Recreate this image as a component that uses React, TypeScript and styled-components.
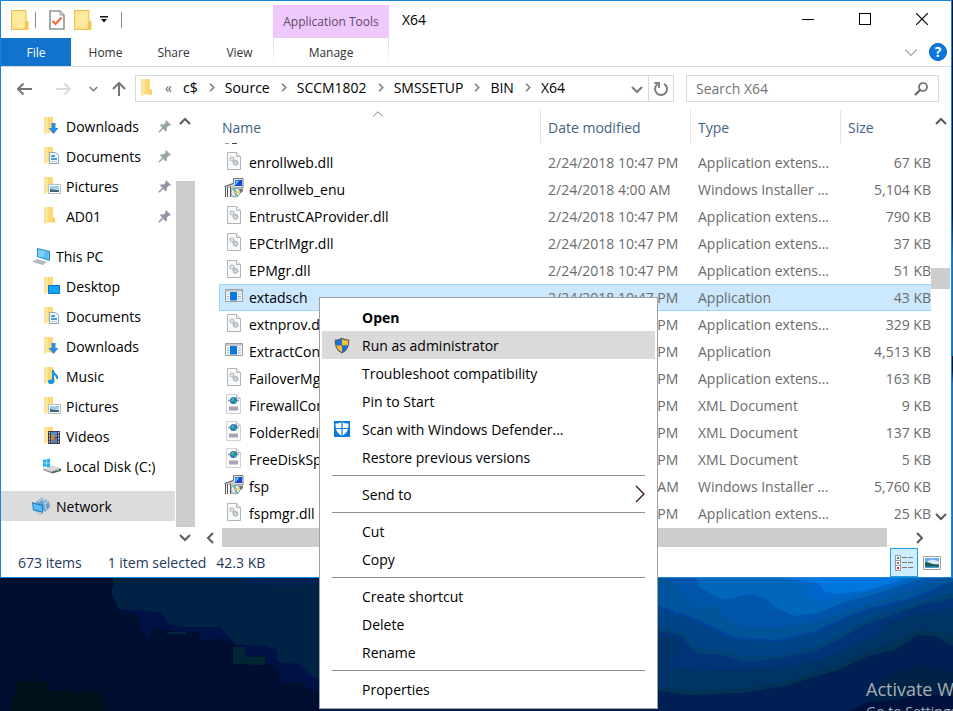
import React from "react";
import styled, { createGlobalStyle, css } from "styled-components";

const GlobalStyle = createGlobalStyle`
  *, *::before, *::after { box-sizing: border-box; }
  html, body { margin: 0; padding: 0; }
  body { font-family: "Open Sans", "Noto Sans", sans-serif; font-size: 14px; color: #000; }
  button, input { font: inherit; color: inherit; }
  svg { display: block; flex: none; }
`;

/* ---------- Icons ---------- */

const FolderIcon = () => (
  <svg width="18" height="20" viewBox="0 0 18 20" aria-hidden="true">
    <path d="M.5.500h14.500v11h2v8H.5z" fill="#fde28a" stroke="#eec04e" />
    <path d="M13.500 12h3v7h-3z" fill="#f4c84d" />
    <path d="M2 2h11.500v15H2z" fill="#feea9e" />
  </svg>
);

const TaskDocIcon = () => (
  <svg width="16" height="20" viewBox="0 0 16 20" aria-hidden="true">
    <path d="M1 1h10l4 4v14H1z" fill="#fff" stroke="#8f9499" strokeWidth="1.6" />
    <path d="M11 1v4h4" fill="#dfe2e5" stroke="#8f9499" />
    <path d="M3.500 11l3 3 6-6.500" fill="none" stroke="#f4683c" strokeWidth="2.200" />
  </svg>
);

const FolderShape = () => (
  <>
    <path d="M1 0h9v11h2v4.500H4L1 17z" fill="#fbd978" />
    <path d="M1 0h4v14l-3 2.500-1-1z" fill="#fee39a" />
    <path d="M10 10.500h2v5h-3z" fill="#f7cd62" />
  </>
);

type NavKind = "downloads" | "documents" | "pictures" | "folder" | "pc" | "desktop" | "music" | "videos" | "disk" | "network";

const NavIcon = ({ kind }: { kind: NavKind }) => {
  if (kind === "pc") {
    return (
      <svg width="20" height="17" viewBox="0 0 20 17" aria-hidden="true">
        <path d="M5 0l13 3v10L5 9z" fill="#2f8fd0" />
        <path d="M6 1.500l11 2.500v7.500L6 8.200z" fill="#5bc0f5" />
        <path d="M6 1.500l8 1.800-4 6L6 8.200z" fill="#7fd0fa" />
        <path d="M0 13.500l5-2.500 10 3-4 3z" fill="#c3c9cd" />
        <path d="M2 13.700l9 2.500M5 12.300l8 2.300" stroke="#8e979d" strokeWidth=".7" />
      </svg>
    );
  }
  if (kind === "network") {
    return (
      <svg width="20" height="18" viewBox="0 0 20 18" aria-hidden="true">
        <path d="M4 5l6-4.500L17 4l1 6-5 5z" fill="#6e9fc4" />
        <path d="M6 5l5-3.500 5 3M11 1l2 6 4-3M13 7l1 6" fill="none" stroke="#b5d4ea" strokeWidth="1.200" />
        <path d="M0 5l11 3v8L1 13.500z" fill="#1f78bd" />
        <path d="M1 6.500l9 2.400v5.600l-8.300-2z" fill="#53bdf7" />
        <path d="M3 16l5-1 4 2-3 1z" fill="#bfc8ce" />
      </svg>
    );
  }
  if (kind === "disk") {
    return (
      <svg width="20" height="16" viewBox="0 0 20 16" aria-hidden="true">
        <path d="M1 2l3-.7v3.500H1zM4.500 1.200L8 .5v4.300H4.500zM1 5.300h3V9L1 8.400zM4.500 5.300H8v4.300L4.500 9z" fill="#1cb2ee" />
        <path d="M1 11l9-3 9 2.500v2L10 15.500l-9-3.500z" fill="#8b8e90" />
        <path d="M1 11l9-3 9 2.500-9 3.200z" fill="#d6d8d9" />
        <path d="M10 13.700l9-3.200v2.500L10 15.500z" fill="#5c6063" />
        <path d="M15 13l2-.7" stroke="#5ff06a" />
      </svg>
    );
  }
  return (
    <svg width="18" height="18" viewBox="0 0 18 18" aria-hidden="true">
      <FolderShape />
      {kind === "downloads" && <path d="M8.500 6h4v5h3L10.500 17l-5-6h3z" fill="#2f8be0" />}
      {kind === "documents" && (
        <>
          <path d="M6.500 5.500h6L15.500 8v8.500h-9z" fill="#f4f7fa" stroke="#94a3b0" />
          <path d="M8 8h4v2H8zM8 11h6v2H8z" fill="#3f9de0" />
          <path d="M8 14.500h6" stroke="#9cc4e2" strokeWidth=".8" />
        </>
      )}
      {kind === "pictures" && (
        <>
          <path d="M5.500 7.500h12v9h-12z" fill="#fff" stroke="#b6bfc6" />
          <path d="M7 9h9v3H7z" fill="#9bcdf0" />
          <path d="M7 12l4 .5 5 .5v2H7z" fill="#3b6878" />
        </>
      )}
      {kind === "desktop" && <path d="M5.500 8.500h11v8h-11z" fill="#13a3f7" stroke="#0875c9" />}
      {kind === "music" && (
        <>
          <path d="M10 4c0 4 5 3 4 8" fill="none" stroke="#1692e8" strokeWidth="2.200" />
          <path d="M10 3v12" stroke="#1692e8" strokeWidth="2" />
          <ellipse cx="8" cy="14.800" rx="3" ry="2.400" fill="#1692e8" />
        </>
      )}
      {kind === "videos" && (
        <>
          <path d="M5 4h12v13H5z" fill="#3d4148" />
          <path d="M8 5h6v5H8z" fill="#4f8ed6" />
          <path d="M8 11h6v5H8z" fill="#5a7fb0" />
          <path d="M8 8l3-1 1 3-2 3-2 1z" fill="#c98a3c" />
          <path d="M6.500 5v12M15.500 5v12" stroke="#d8dadd" strokeDasharray="1.500 1.500" />
        </>
      )}
    </svg>
  );
};

const PinIcon = ({ color }: { color: string }) => (
  <svg width="13" height="13" viewBox="0 0 13 13" aria-hidden="true">
    <path d="M8 0l5 5-1.300.8-.9-.3-2 2.200.2 2.800-1.200 1L2 5.200l1.200-1 2.600.3 2-2.300-.4-1z" fill={color} />
    <path d="M5 8L.8 12.200" stroke={color} strokeWidth="1.500" />
  </svg>
);

type FileKind = "dll" | "msi" | "exe" | "xml";

const FileIcon = ({ kind }: { kind: FileKind }) => {
  if (kind === "msi") {
    return (
      <svg width="20" height="20" viewBox="0 0 20 20" aria-hidden="true">
        <path d="M9.500.500h9.500v9.500H9.500z" fill="#e4e4e0" stroke="#777" />
        <path d="M11 2h7v6h-7z" fill="#1246d6" />
        <path d="M11.500 2.500h4L12 7h-.5z" fill="#4fc3f5" />
        <path d="M13 11h6v2l-2 2h-3z" fill="#777" />
        <path d="M1 8l8-3 2 3v11H6V10H4v9H1z" fill="#c9c9c9" />
        <path d="M1.500 9v10M3.500 9v10M6.500 8.500V19M.5 8.500L9 5.500" stroke="#555" />
        <path d="M2.500 9.500v9" stroke="#fff" />
        <circle cx="11.500" cy="14.500" r="4.500" fill="#e6efec" stroke="#7b8785" strokeWidth=".8" />
        <path d="M11.500 14.500L8.300 11.500a4.500 4.500 0 013.700-1.300zM11.500 14.500l3 3a4.500 4.500 0 01-3.500 1.200z" fill="#5cc8a0" />
        <path d="M11.500 14.500l3.800-2.300a4.500 4.500 0 01.3 3.300z" fill="#f0dd67" />
        <circle cx="11.500" cy="14.500" r="1.200" fill="#fff" stroke="#666" strokeWidth=".7" />
      </svg>
    );
  }
  if (kind === "exe") {
    return (
      <svg width="18" height="14" viewBox="0 0 18 14" aria-hidden="true">
        <path d="M.5.500h17v12h-17z" fill="#f7f8f9" stroke="#9a9da0" />
        <path d="M1 1h16v2H1z" fill="#c9ccce" />
        <path d="M5 3h7v8.500H5z" fill="#0a78dc" />
        <path d="M2 5h2M2 7.500h2M2 10h2M13 5h3M13 7.500h3M13 10h3" stroke="#9db4c6" />
      </svg>
    );
  }
  if (kind === "xml") {
    return (
      <svg width="17" height="20" viewBox="0 0 17 20" aria-hidden="true">
        <path d="M1.500.500h10l4 4v15h-14z" fill="#fbfbfc" stroke="#d0d2d6" />
        <path d="M11.500.500v4h4" fill="#e6e8ea" stroke="#b2b5b9" />
        <path d="M3 6.500h11" stroke="#9a93a0" strokeWidth="1.500" />
        <circle cx="8.500" cy="6.500" r="3.500" fill="#1f6fd0" />
        <path d="M6.500 4.500l2.500-1 .5 2.500-2 2-1.500-1zM9.500 7.500l2-1v2l-2 1z" fill="#3fc07a" />
        <path d="M4 12.500h9v4H4z" fill="#aaa2b4" />
      </svg>
    );
  }
  return (
    <svg width="14" height="18" viewBox="0 0 14 18" aria-hidden="true">
      <path d="M.5.500h9l4 4v13H.5z" fill="#fafafa" stroke="#b3b3b3" />
      <path d="M9.500.500v4h4" fill="#ececec" stroke="#b5b5b5" />
      <circle cx="5" cy="7" r="2" fill="#e4eaed" stroke="#a9b8c0" strokeWidth="1.400" strokeDasharray="1.400 .5" />
      <circle cx="8.500" cy="10.800" r="2.200" fill="#d3dde2" stroke="#9dadb6" strokeWidth="1.500" strokeDasharray="1.500 .5" />
    </svg>
  );
};

type Dir = "up" | "down" | "left" | "right";
const chevronPaths: Record<Dir, string> = {
  up: "M1 8l5-5 5 5",
  down: "M1 4l5 5 5-5",
  left: "M8 1L3 6l5 5",
  right: "M4 1l5 5-5 5",
};
const Chevron = ({ dir, size = 12, color = "#5a5a5a", weight = 2 }: { dir: Dir; size?: number; color?: string; weight?: number }) => (
  <svg width={size} height={size} viewBox="0 0 12 12" aria-hidden="true">
    <path d={chevronPaths[dir]} fill="none" stroke={color} strokeWidth={weight} />
  </svg>
);

const Arrow = ({ dir, color }: { dir: "left" | "right" | "up"; color: string }) => (
  <svg width="16" height="16" viewBox="0 0 16 16" aria-hidden="true">
    <path
      d={dir === "left" ? "M15 8H1M6.500 2.500L1 8l5.500 5.500" : dir === "right" ? "M1 8h14M9.500 2.500L15 8l-5.500 5.500" : "M8 15V2M2 8l6-6 6 6"}
      fill="none"
      stroke={color}
      strokeWidth="2"
    />
  </svg>
);

const RefreshIcon = () => (
  <svg width="16" height="16" viewBox="0 0 16 16" aria-hidden="true">
    <path d="M11 2.800A6 6 0 114.500 3.200" fill="none" stroke="#7d7d7d" strokeWidth="2" />
    <path d="M1.500 2h4.500v5" fill="none" stroke="#7d7d7d" strokeWidth="1.800" />
  </svg>
);

const SearchIcon = () => (
  <svg width="14" height="14" viewBox="0 0 14 14" aria-hidden="true">
    <circle cx="9" cy="5" r="4" fill="none" stroke="#6c6c6c" strokeWidth="1.700" />
    <path d="M6 8l-5 5" stroke="#6c6c6c" strokeWidth="2.400" />
  </svg>
);

const ShieldIcon = () => (
  <svg width="16" height="17" viewBox="0 0 16 17" aria-hidden="true">
    <path d="M8 .5c2 1.500 4.500 2 7.200 2 .3 6-1.200 11-7.200 14C2 13.500.5 8.500.8 2.500 3.500 2.500 6 2 8 .5z" fill="#585d64" />
    <path d="M8 2v6.500H2.200C1.900 7 1.900 5 2 3.600 4.200 3.500 6.300 3 8 2z" fill="#1b6fd6" />
    <path d="M8 2v6.500h5.800c.3-1.500.3-3.500.2-4.900C11.800 3.500 9.700 3 8 2z" fill="#fbc02f" />
    <path d="M8 8.500v6.700c-3.200-1.700-5-3.700-5.800-6.700z" fill="#fbc02f" />
    <path d="M8 8.500v6.700c3.200-1.700 5-3.700 5.800-6.700z" fill="#1b6fd6" />
  </svg>
);

const DefenderIcon = () => (
  <svg width="16" height="16" viewBox="0 0 16 16" aria-hidden="true">
    <path d="M0 0h16v16H0z" fill="#0a78dc" />
    <path d="M8 1c2 1.200 4 1.500 6.500 1.500 0 5.500-1 9.500-6.500 12.500-5.500-3-6.500-7-6.500-12.500C4 2.500 6 2.200 8 1z" fill="#fff" />
    <path d="M8 1v14M1 7.500h14" stroke="#0a78dc" strokeWidth="1.200" />
  </svg>
);

const DetailsViewIcon = () => (
  <svg width="18" height="16" viewBox="0 0 18 16" shapeRendering="crispEdges" aria-hidden="true">
    <path d="M.5.500h5v15h-5z" fill="#fff" stroke="#9a9a9a" />
    <path d="M1 5h4v1H1zM1 10h4v1H1z" fill="#9a9a9a" />
    <path d="M2 2h2v2H2z" fill="#3f7f5f" />
    <path d="M2 7h2v2H2z" fill="#8c6b3a" />
    <path d="M2 12h2v2H2z" fill="#d12c20" />
    <path d="M7 2.500h5M13 2.500h5M7 7.500h5M13 7.500h5M7 12.500h5M13 12.500h5" stroke="#7a7a7a" />
  </svg>
);

const ThumbViewIcon = () => (
  <svg width="18" height="14" viewBox="0 0 18 14" aria-hidden="true">
    <path d="M.5.500h17v13H.5z" fill="#fff" stroke="#9f9f9f" />
    <path d="M2 2h14v10H2z" fill="#6aa8ec" />
    <path d="M4 5l6-1.500 6 2v3H8z" fill="#d9e9f8" />
    <path d="M2 6c4 0 8 3 14 2.500V11H2z" fill="#1f5a52" />
    <path d="M2 10.500h14V12H2z" fill="#3fa0c8" />
  </svg>
);

const Wallpaper = styled.svg`
  width: 100%;
  height: 100%;
`;

const WallpaperArt = () => (
  <Wallpaper viewBox="0 0 953 133" preserveAspectRatio="none" aria-hidden="true">
    <path d="M0 0H953V133H0z" fill="#000f30" />
    <path d="M10 133L12 117 19 112 16 103H47V113L68 112 73 115 98 113 107 133zM30 93L36 92 35 97 31 98z" fill="#001119" />
    <path d="M117 0L111 14 119 32 137 36 141 52 150 65 152 50 180 54 201 54V64L220 60 235 65 245 74V79L266 78V86L278 88 280 104 300 104 312 113 320 110V0z" fill="#001146" />
    <path d="M117 0L111 14 119 31 160 34 168 45 180 49 220 49 235 66 265 68 277 72V84L298 86 312 98 320 102V0z" fill="#002244" />
    <path d="M247 0H320V6L290 8 262 6 247 4z" fill="#002255" />
    <path d="M233 69H245V79H265V87L233 86zM168 54H186V56H168zM113 0H122V5H113z" fill="#002533" />
    <path d="M320 0H953V133H320z" fill="#002055" />
    <path d="M655 112L688 117 742 115 788 107 838 92 868 78 895 72 918 57 935 58 953 68V0H655z" fill="#003355" />
    <path d="M655 109L688 113 742 111 788 103 838 87 868 72 895 64 918 52 935 53 953 58V0H655z" fill="#003366" />
    <path d="M655 59L675 59 680 70 668 88 700 92 755 91 788 88 822 81 852 68 872 60 888 45 908 38 953 30V0H655z" fill="#003377" />
    <path d="M655 52L682 58 695 75 722 77 745 84 782 80 815 73 842 60 862 48 895 36 922 27 953 20V0H655z" fill="#004477" />
    <path d="M655 47L682 54 695 69 722 72 745 79 782 77 815 68 842 56 862 44 895 32 922 24 953 14V0H655z" fill="#004488" />
    <path d="M655 29L695 43 735 61 776 64 815 55 842 42 862 34 909 22 953 5V0H655z" fill="#0044a0" />
    <path d="M655 26L695 40 735 59 776 62 815 53 842 40 862 32 909 20 953 3V0H655z" fill="#005599" />
    <path d="M655 22L668 24 675 35 697 32 694 25 680 14 655 5z" fill="#0055a0" />
    <path d="M667 0L684 18 697 30 715 27 725 42 745 50 788 49 822 42 855 30 895 17 935 4 945 0z" fill="#0055aa" />
    <path d="M696 0L698 8 722 22 752 16 768 22 775 30 795 38 818 35 842 25 888 12 925 0z" fill="#0066bb" />
    <path d="M780 0L806 6 808 18 824 24 850 18 890 8 915 0z" fill="#0066cc" />
    <path d="M785 0L818 5 825 14 838 16 868 12 908 0z" fill="#0077dd" />
    <path d="M872 120L885 100 920 88 953 94V133H872z" fill="#002244" />
    <path d="M850 133L868 124 898 122 918 116 953 118V133z" fill="#00103c" />
  </Wallpaper>
);

/* ---------- Page structure ---------- */

const Desktop = styled.div`
  position: relative;
  display: flex;
  flex-direction: column;
  min-height: 100vh;
  overflow: hidden;
  background: linear-gradient(#001a44 0 30%, #0a78c8 36% 50%, #001a44 50% 52%, #0a78dc 54%);
`;

const Backdrop = styled.div`
  flex: 1 0 133px;
  height: 133px;
  min-width: 0;
`;

const Activation = styled.div`
  position: absolute;
  right: -92px;
  bottom: -11px;
  width: 179px;
  color: #a9adb3;
  white-space: nowrap;
`;
const ActivationTitle = styled.div`
  font-size: 18px;
  line-height: 26px;
`;
const ActivationText = styled.div`
  font-size: 14px;
  line-height: 20px;
`;

const Window = styled.main`
  margin-right: 1px;
  border: 1px solid #1883d7;
  background: #fff;
`;

const plainButton = css`
  display: flex;
  align-items: center;
  justify-content: center;
  border: 0;
  padding: 0;
  background: none;
`;

const IconButton = styled.button<{ $width?: number; $height?: number }>`
  ${plainButton}
  flex: none;
  width: ${(p) => p.$width ?? 20}px;
  height: ${(p) => p.$height ?? 20}px;
`;

const TitleBar = styled.header`
  display: flex;
  height: 37px;
  padding-right: 1px;
`;

const QuickAccess = styled.div`
  display: flex;
  align-items: center;
  width: 272px;
  padding-left: 9px;
`;
const Divider = styled.span<{ $gap: number }>`
  width: 1px;
  height: 16px;
  margin: 0 ${(p) => p.$gap}px;
  background: #8a8a8a;
`;

const ToolsTab = styled.div`
  display: flex;
  align-items: center;
  justify-content: center;
  width: 116px;
  margin-top: 4px;
  background: #efc9fd;
  color: #5b4a66;
  font-size: 12px;
`;

const WindowTitle = styled.h1`
  flex: 1;
  margin: 0;
  padding-left: 13px;
  font-size: 14px;
  font-weight: 400;
  line-height: 37px;
`;

const Ribbon = styled.nav`
  display: flex;
  height: 29px;
  border-bottom: 1px solid #dadbdc;
`;
const RibbonTab = styled.button<{ $width: number; $kind?: "file" | "tool" }>`
  ${plainButton}
  width: ${(p) => p.$width}px;
  height: 28px;
  font-size: 12px;
  color: #333;
  ${(p) => p.$kind === "file" && css`background: #1173cb; color: #fff;`}
  ${(p) =>
    p.$kind === "tool" &&
    css`
      border-style: solid;
      border-width: 0 1px;
      border-image: linear-gradient(#dcdcdc, #fff) 1;
    `}
`;
const Spacer = styled.div<{ $width?: number }>`
  flex: ${(p) => (p.$width ? `0 0 ${p.$width}px` : "1")};
`;
const HelpButton = styled.button`
  ${plainButton}
  align-self: center;
  width: 18px;
  height: 18px;
  margin: 0 4px 0 11px;
  border: 1px solid #0a5cae;
  border-radius: 50%;
  background: #0a78dc;
  color: #fff;
  font-size: 14px;
  font-weight: 700;
  line-height: 16px;
`;

const AddressRow = styled.div`
  display: flex;
  align-items: center;
  height: 43px;
  padding-right: 12px;
`;
const AddressBox = styled.div`
  display: flex;
  align-items: center;
  flex: 1;
  height: 27px;
  border: 1px solid #d9d9d9;
`;
const Crumbs = styled.div`
  display: flex;
  align-items: center;
  flex: 1;
  min-width: 0;
  padding-bottom: 2px;
`;
const Crumb = styled.button`
  ${plainButton}
  line-height: 20px;
`;
const CrumbMore = styled.span`
  width: 24px;
  padding-left: 6px;
  color: #666;
  line-height: 20px;
`;
const Refresh = styled.button`
  ${plainButton}
  width: 25px;
  height: 25px;
  border-left: 1px solid #d9d9d9;
`;
const SearchBox = styled.label`
  display: flex;
  align-items: center;
  width: 253px;
  height: 27px;
  margin-left: 12px;
  padding: 0 10px 0 9px;
  border: 1px solid #d9d9d9;
`;
const SearchInput = styled.input`
  flex: 1;
  min-width: 0;
  border: 0;
  padding: 0;
  outline: 0;
  background: none;
  &::placeholder { color: #737373; opacity: 1; }
`;

const Body = styled.div`
  display: flex;
`;
const Sidebar = styled.nav`
  width: 174px;
  padding-top: 1px;
`;
const NavItem = styled.a<{ $level: 0 | 1; $gap?: boolean; $current?: boolean }>`
  display: flex;
  align-items: center;
  height: 30px;
  margin-top: ${(p) => (p.$gap ? 10 : 0)}px;
  padding: 0 4px 0 ${(p) => (p.$level ? 41 : 31)}px;
  background: ${(p) => (p.$current ? "#dcdcdc" : "none")};
  color: #000;
  text-decoration: none;
  white-space: nowrap;
`;
const NavIconBox = styled.span`
  display: flex;
  justify-content: center;
  flex: none;
  width: 20px;
  margin-right: 4px;
`;
const NavLabel = styled.span`
  flex: 1;
`;

const VScroll = styled.div`
  display: flex;
  flex-direction: column;
  flex: none;
  align-items: flex-start;
  width: 20px;
`;
const VTrack = styled.div<{ $before: number; $after?: number; $inset?: number }>`
  flex: 1;
  width: 19px;
  margin-left: ${(p) => p.$inset ?? 0}px;
  padding: ${(p) => p.$before}px 0 ${(p) => p.$after ?? 0}px;
`;
const Thumb = styled.div`
  height: 100%;
  background: #cdcdcd;
`;

const FilePane = styled.section`
  flex: 1;
  min-width: 0;
  margin-left: 7px;
`;
const ListArea = styled.div`
  display: flex;
  padding-left: 17px;
`;
const FileTable = styled.table`
  flex: 1;
  table-layout: fixed;
  width: 100%;
  border-collapse: separate;
  border-spacing: 0;
`;
const Col = styled.col<{ $width?: number }>`
  width: ${(p) => (p.$width ? `${p.$width}px` : "auto")};
`;
const HeadCell = styled.th<{ $first?: boolean }>`
  height: 33px;
  padding: 2px 0 0 ${(p) => (p.$first ? 3 : 7)}px;
  border-left: ${(p) => (p.$first ? 0 : 1)}px solid #e5e5e5;
  color: #43627f;
  font-weight: 400;
  text-align: left;
`;
const HeadInner = styled.div`
  position: relative;
  line-height: 20px;
`;
const SortMark = styled.span`
  position: absolute;
  top: -9px;
  left: 49%;
  transform: translateX(-50%);
`;
const SliverCell = styled.td`
  height: 6px;
  padding: 0 0 4px 6px;
  line-height: 0;
`;
const Row = styled.tr<{ $selected?: boolean }>`
  td {
    height: 27px;
    ${(p) =>
      p.$selected &&
      css`
        background: #cce8ff;
        border-top: 1px solid #99d8fb;
        border-bottom: 1px solid #99d8fb;
        &:first-child { border-left: 1px solid #99d8fb; padding-left: 4px; }
      `}
  }
`;
const Cell = styled.td<{ $kind: "name" | "text" | "size" }>`
  padding: 0 0 0 ${(p) => (p.$kind === "name" ? 5 : 8)}px;
  color: ${(p) => (p.$kind === "name" ? "#000" : "#6b6b6b")};
  text-align: ${(p) => (p.$kind === "size" ? "right" : "left")};
  white-space: nowrap;
  line-height: 20px;
`;
const FileName = styled.span`
  display: flex;
  align-items: center;
  height: 20px;
`;
const FileIconBox = styled.span`
  display: flex;
  justify-content: center;
  flex: none;
  width: 20px;
  margin-right: 5px;
  padding: 0 1px 3px 0;
`;

const HScroll = styled.div`
  display: flex;
  align-items: center;
  height: 20px;
  padding: 1px 22px 0 0;
`;
const HTrack = styled.div`
  flex: 1;
  height: 19px;
  padding: 0 22px 0 3px;
`;

const StatusBar = styled.footer`
  display: flex;
  align-items: center;
  height: 30px;
  padding: 0 5px 0 17px;
  color: #1e395b;
`;
const StatusText = styled.span<{ $gap: number }>`
  margin-right: ${(p) => p.$gap}px;
`;
const ViewButton = styled.button<{ $active?: boolean }>`
  ${plainButton}
  width: 28px;
  height: 29px;
  margin-top: 1px;
  ${(p) => p.$active && css`border: 1px solid #26a0da; background: #cdeeff;`}
`;

const Menu = styled.div`
  position: absolute;
  top: 297px;
  left: 319px;
  width: 339px;
  padding: 5px 2px;
  border: 1px solid #a0a0a0;
  background: #fff;
`;
const MenuItem = styled.button<{ $strong?: boolean; $hover?: boolean }>`
  display: flex;
  align-items: center;
  width: 100%;
  height: 28px;
  padding: 0 10px 0 0;
  border: 0;
  background: ${(p) => (p.$hover ? "#dadada" : "none")};
  font-weight: ${(p) => (p.$strong ? 700 : 400)};
  line-height: 20px;
  text-align: left;
`;
const MenuLabel = styled.span`
  flex: 1;
  padding-top: 2px;
`;
const MenuIcon = styled.span`
  display: flex;
  justify-content: center;
  flex: none;
  width: 40px;
`;
const MenuRule = styled.hr`
  height: 1px;
  margin: 4px 10px;
  border: 0;
  background: #919191;
`;

/* ---------- Data ---------- */

const navItems: { label: string; kind: NavKind; level: 0 | 1; pin?: string; gap?: boolean; current?: boolean }[] = [
  { label: "Downloads", kind: "downloads", level: 1, pin: "#93a5a5" },
  { label: "Documents", kind: "documents", level: 1, pin: "#93a5a5" },
  { label: "Pictures", kind: "pictures", level: 1, pin: "#9494a6" },
  { label: "AD01", kind: "folder", level: 1, pin: "#9494a6" },
  { label: "This PC", kind: "pc", level: 0, gap: true },
  { label: "Desktop", kind: "desktop", level: 1 },
  { label: "Documents", kind: "documents", level: 1 },
  { label: "Downloads", kind: "downloads", level: 1 },
  { label: "Music", kind: "music", level: 1 },
  { label: "Pictures", kind: "pictures", level: 1 },
  { label: "Videos", kind: "videos", level: 1 },
  { label: "Local Disk (C:)", kind: "disk", level: 1 },
  { label: "Network", kind: "network", level: 0, gap: true, current: true },
];

const EXT = "Application extens...";
const files: { name: string; kind: FileKind; date: string; type: string; size: string; selected?: boolean }[] = [
  { name: "enrollweb.dll", kind: "dll", date: "2/24/2018 10:47 PM", type: EXT, size: "67 KB" },
  { name: "enrollweb_enu", kind: "msi", date: "2/24/2018 4:00 AM", type: "Windows Installer ...", size: "5,104 KB" },
  { name: "EntrustCAProvider.dll", kind: "dll", date: "2/24/2018 10:47 PM", type: EXT, size: "790 KB" },
  { name: "EPCtrlMgr.dll", kind: "dll", date: "2/24/2018 10:47 PM", type: EXT, size: "37 KB" },
  { name: "EPMgr.dll", kind: "dll", date: "2/24/2018 10:47 PM", type: EXT, size: "51 KB" },
  { name: "extadsch", kind: "exe", date: "2/24/2018 10:47 PM", type: "Application", size: "43 KB", selected: true },
  { name: "extnprov.dll", kind: "dll", date: "2/24/2018 10:47 PM", type: EXT, size: "329 KB" },
  { name: "ExtractContent", kind: "exe", date: "2/24/2018 10:47 PM", type: "Application", size: "4,513 KB" },
  { name: "FailoverMgr.dll", kind: "dll", date: "2/24/2018 10:47 PM", type: EXT, size: "163 KB" },
  { name: "FirewallConfig", kind: "xml", date: "2/24/2018 10:47 PM", type: "XML Document", size: "9 KB" },
  { name: "FolderRedirection", kind: "xml", date: "2/24/2018 10:47 PM", type: "XML Document", size: "137 KB" },
  { name: "FreeDiskSpace", kind: "xml", date: "2/24/2018 10:47 PM", type: "XML Document", size: "5 KB" },
  { name: "fsp", kind: "msi", date: "2/24/2018 10:47 AM", type: "Windows Installer ...", size: "5,760 KB" },
  { name: "fspmgr.dll", kind: "dll", date: "2/24/2018 10:47 PM", type: EXT, size: "25 KB" },
];

const crumbs = ["c$", "Source", "SCCM1802", "SMSSETUP", "BIN", "X64"];

type Entry = { label: string; icon?: "shield" | "defender"; strong?: boolean; hover?: boolean; sub?: boolean };
const menuGroups: Entry[][] = [
  [
    { label: "Open", strong: true },
    { label: "Run as administrator", icon: "shield", hover: true },
    { label: "Troubleshoot compatibility" },
    { label: "Pin to Start" },
    { label: "Scan with Windows Defender...", icon: "defender" },
    { label: "Restore previous versions" },
  ],
  [{ label: "Send to", sub: true }],
  [{ label: "Cut" }, { label: "Copy" }],
  [{ label: "Create shortcut" }, { label: "Delete" }, { label: "Rename" }],
  [{ label: "Properties" }],
];

export default function App() {
  return (
    <Desktop>
      <GlobalStyle />
      <Window>
        <TitleBar>
          <QuickAccess>
            <IconButton aria-label="Explorer"><FolderIcon /></IconButton>
            <Divider $gap={5} />
            <Spacer $width={6} />
            <IconButton aria-label="Properties" $width={20}><TaskDocIcon /></IconButton>
            <IconButton aria-label="New folder" $width={32}><FolderIcon /></IconButton>
            <IconButton aria-label="Customize toolbar" $width={10}>
              <svg width="8" height="7" viewBox="0 0 8 7" aria-hidden="true">
                <path d="M0 0h8v1.500H0zM1 3h6L4 6.500z" fill="#111" />
              </svg>
            </IconButton>
            <Divider $gap={12} />
          </QuickAccess>
          <ToolsTab>Application Tools</ToolsTab>
          <WindowTitle>X64</WindowTitle>
          <IconButton aria-label="Minimize" $width={56} $height={36}>
            <svg width="12" height="12" viewBox="0 0 12 12" shapeRendering="crispEdges"><path d="M0 6.500h12" stroke="#000" /></svg>
          </IconButton>
          <IconButton aria-label="Maximize" $width={57} $height={36}>
            <svg width="12" height="12" viewBox="0 0 12 12" shapeRendering="crispEdges"><path d="M.5.500h11v11H.5z" fill="none" stroke="#000" /></svg>
          </IconButton>
          <IconButton aria-label="Close" $width={57} $height={36}>
            <svg width="12" height="12" viewBox="0 0 12 12"><path d="M0 0l12 12M12 0L0 12" stroke="#000" strokeWidth="1.200" /></svg>
          </IconButton>
        </TitleBar>

        <Ribbon aria-label="Ribbon tabs">
          <RibbonTab $width={70} $kind="file">File</RibbonTab>
          <RibbonTab $width={69}>Home</RibbonTab>
          <RibbonTab $width={67}>Share</RibbonTab>
          <RibbonTab $width={65}>View</RibbonTab>
          <Spacer $width={1} />
          <RibbonTab $width={116} $kind="tool">Manage</RibbonTab>
          <Spacer />
          <IconButton aria-label="Collapse ribbon" $width={14} $height={28}>
            <Chevron dir="down" size={14} color="#a0a0a0" weight={1} />
          </IconButton>
          <HelpButton aria-label="Help">?</HelpButton>
        </Ribbon>

        <AddressRow>
          <Spacer $width={12} />
          <IconButton aria-label="Back" $width={24}><Arrow dir="left" color="#757575" /></IconButton>
          <Spacer $width={14} />
          <IconButton aria-label="Forward" $width={24}><Arrow dir="right" color="#dadada" /></IconButton>
          <Spacer $width={8} />
          <IconButton aria-label="Recent locations"><Chevron dir="down" size={9} color="#7a7a7a" /></IconButton>
          <Spacer $width={6} />
          <IconButton aria-label="Up"><Arrow dir="up" color="#757575" /></IconButton>
          <Spacer $width={6} />
          <AddressBox>
            <Crumbs>
              <Spacer $width={4} />
              <svg width="14" height="18" viewBox="0 0 14 18" aria-hidden="true"><FolderShape /></svg>
              <Spacer $width={5} />
              <CrumbMore>«</CrumbMore>
              {crumbs.map((c, i) => (
                <React.Fragment key={c}>
                  {i > 0 && (
                    <IconButton aria-label={`Folders beside ${c}`} $width={27}>
                      <Chevron dir="right" size={9} color="#7a7a7a" />
                    </IconButton>
                  )}
                  <Crumb>{c}</Crumb>
                </React.Fragment>
              ))}
            </Crumbs>
            <IconButton aria-label="Previous locations" $width={22}><Chevron dir="down" color="#7a7a7a" /></IconButton>
            <Refresh aria-label="Refresh"><RefreshIcon /></Refresh>
          </AddressBox>
          <SearchBox>
            <SearchInput type="text" placeholder="Search X64" aria-label="Search X64" />
            <SearchIcon />
          </SearchBox>
        </AddressRow>

        <Body>
          <Sidebar aria-label="Navigation pane">
            {navItems.map((n, i) => (
              <NavItem key={i} href="#" $level={n.level} $gap={n.gap} $current={n.current}>
                <NavIconBox><NavIcon kind={n.kind} /></NavIconBox>
                <NavLabel>{n.label}</NavLabel>
                {n.pin && <PinIcon color={n.pin} />}
              </NavItem>
            ))}
          </Sidebar>
          <VScroll>
            <IconButton aria-label="Scroll up" $height={24}><Chevron dir="up" /></IconButton>
            <VTrack $before={47} $inset={1}><Thumb /></VTrack>
            <IconButton aria-label="Scroll down"><Chevron dir="down" /></IconButton>
          </VScroll>
          <FilePane>
            <ListArea>
              <FileTable>
                <colgroup>
                  <Col />
                  <Col $width={150} />
                  <Col $width={150} />
                  <Col $width={91} />
                </colgroup>
                <thead>
                  <tr>
                    <HeadCell $first>
                      <HeadInner>
                        Name
                        <SortMark><Chevron dir="up" size={11} color="#707070" weight={1} /></SortMark>
                      </HeadInner>
                    </HeadCell>
                    <HeadCell>Date modified</HeadCell>
                    <HeadCell>Type</HeadCell>
                    <HeadCell>Size</HeadCell>
                  </tr>
                </thead>
                <tbody>
                  <tr>
                    <SliverCell colSpan={4}>
                      <svg width="14" height="2" viewBox="0 0 14 2" aria-hidden="true">
                        <path d="M0 .5h4" stroke="#999" />
                        <path d="M7 .5h5" stroke="#444" />
                      </svg>
                    </SliverCell>
                  </tr>
                  {files.map((f) => (
                    <Row key={f.name} $selected={f.selected}>
                      <Cell $kind="name">
                        <FileName>
                          <FileIconBox><FileIcon kind={f.kind} /></FileIconBox>
                          {f.name}
                        </FileName>
                      </Cell>
                      <Cell $kind="text">{f.date}</Cell>
                      <Cell $kind="text">{f.type}</Cell>
                      <Cell $kind="size">{f.size}</Cell>
                    </Row>
                  ))}
                </tbody>
              </FileTable>
              <VScroll>
                <IconButton aria-label="Scroll list up" $height={24}><Chevron dir="up" /></IconButton>
                <VTrack $before={134} $after={216}><Thumb /></VTrack>
                <IconButton aria-label="Scroll list down" $height={22}><Chevron dir="down" /></IconButton>
              </VScroll>
            </ListArea>
            <HScroll>
              <IconButton aria-label="Scroll list left" $width={17}><Chevron dir="left" /></IconButton>
              <HTrack><Thumb /></HTrack>
              <IconButton aria-label="Scroll list right"><Chevron dir="right" /></IconButton>
            </HScroll>
          </FilePane>
        </Body>

        <StatusBar>
          <StatusText $gap={26}>673 items</StatusText>
          <StatusText $gap={10}>1 item selected</StatusText>
          <StatusText $gap={0}>42.3 KB</StatusText>
          <Spacer />
          <ViewButton $active aria-label="Details view"><DetailsViewIcon /></ViewButton>
          <ViewButton aria-label="Large icons view"><ThumbViewIcon /></ViewButton>
        </StatusBar>
      </Window>

      <Backdrop><WallpaperArt /></Backdrop>
      <Activation>
        <ActivationTitle>Activate Windows</ActivationTitle>
        <ActivationText>Go to Settings to activate Windows.</ActivationText>
      </Activation>

      <Menu role="menu">
        {menuGroups.map((group, g) => (
          <React.Fragment key={g}>
            {g > 0 && <MenuRule />}
            {group.map((m) => (
              <MenuItem key={m.label} role="menuitem" $strong={m.strong} $hover={m.hover}>
                <MenuIcon>
                  {m.icon === "shield" && <ShieldIcon />}
                  {m.icon === "defender" && <DefenderIcon />}
                </MenuIcon>
                <MenuLabel>{m.label}</MenuLabel>
                {m.sub && (
                  <svg width="10" height="18" viewBox="0 0 10 18" aria-hidden="true">
                    <path d="M1 1l8 8-8 8" fill="none" stroke="#3a1518" strokeWidth="1.300" />
                  </svg>
                )}
              </MenuItem>
            ))}
          </React.Fragment>
        ))}
      </Menu>
    </Desktop>
  );
}
